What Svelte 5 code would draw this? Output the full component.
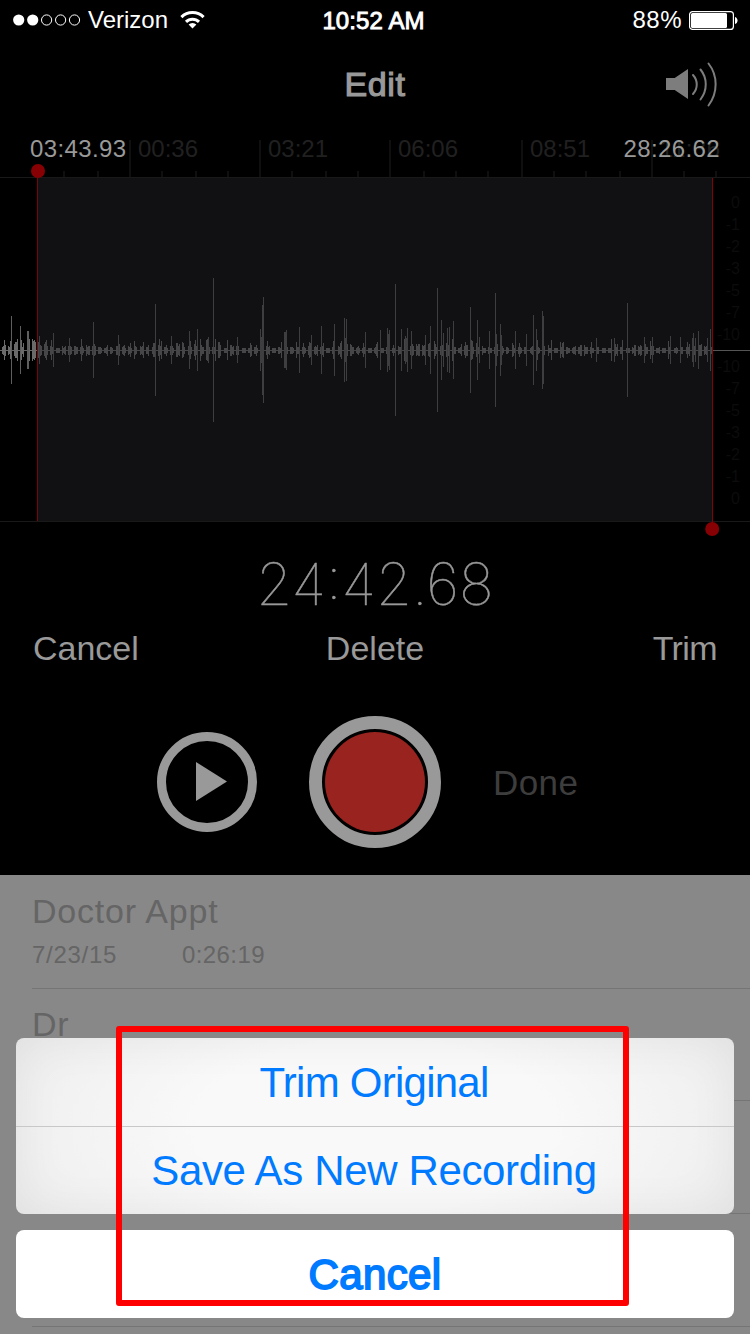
<script>
    // x offset and half height of every bar in the waveform
    const peaks = [
        "2:3 3:4 4:10 5:5 8:4 9:3 10:9 11:34 14:6 15:8 16:8 17:11 20:24 21:10 22:3 23:7 27:19 28:19 29:11 32:11 33:9 34:10 35:8",
        "38:8 39:14 40:5 41:4 44:6 45:8 46:10 47:4 50:4 51:10 52:3 53:17 56:2 57:2 58:2 59:2 62:4 63:2 64:3 65:4 68:4 69:12 70:4 71:3",
        "74:4 75:4 76:3 77:3 80:3 81:11 82:4 83:2 86:5 87:3 88:4 89:4 92:4 93:28 94:6 95:4 98:3 99:3 100:3 101:2 104:2 105:2 106:3 107:5",
        "110:3 111:3 112:2 116:4 117:4 118:15 119:6 122:3 123:4 124:5 125:2 128:4 129:3 130:7 131:2 134:9 135:4 136:3 140:4 141:3 142:4 143:8",
        "146:3 147:3 148:5 152:3 153:7 154:7 155:46 158:5 159:11 160:4 161:9 164:3 165:3 166:5 167:2 170:4 171:14 172:4 173:2 176:7 177:7 178:4 179:6",
        "182:8 183:7 184:3 188:4 189:19 190:9 191:3 194:6 195:10 196:4 197:21 200:11 201:5 202:3 203:3 206:10 207:11 208:13 209:3 212:3 213:72 214:3 215:11",
        "218:8 219:8 220:5 224:2 225:2 226:2 227:10 230:5 231:5 232:3 233:4 236:4 237:13 238:4 242:2 243:2 244:2 245:2 248:2 249:2 250:7 251:5",
        "254:3 255:3 256:5 257:2 260:21 261:13 262:45 263:53 266:4 267:9 268:3 269:4 272:2 273:2 274:2 275:2 278:3 279:3 280:2 281:8 284:18 285:18 286:20 287:3",
        "290:3 291:3 292:3 293:2 296:8 297:3 298:3 299:23 302:3 303:7 304:3 305:2 308:4 309:8 310:7 311:15 314:3 315:4 316:3 317:5 320:3 321:24 322:4 323:7",
        "326:2 327:2 328:2 329:2 332:3 333:9 334:26 338:4 339:3 340:7 341:9 344:32 345:12 346:31 347:6 350:6 351:5 352:3 353:3 356:2 357:3 358:4 359:2",
        "362:2 363:7 364:3 365:18 368:2 369:2 370:2 371:2 374:2 375:3 376:6 377:8 380:20 381:2 382:2 383:2 386:3 387:22 388:16 389:20 392:2 393:5 394:2 395:66",
        "398:4 399:3 400:3 401:21 404:11 405:14 406:12 407:22 410:4 411:19 412:6 413:4 416:6 417:4 418:6 419:6 422:5 423:4 424:5 425:15 428:6 429:7 430:24",
        "434:9 435:6 436:3 437:62 440:4 441:30 442:5 443:17 446:7 447:22 448:5 449:23 452:11 453:29 454:3 455:3 458:2 459:2 460:3 461:6 464:4 465:8 466:5 467:5",
        "470:43 471:10 472:9 473:3 476:7 477:30 478:3 479:13 482:4 483:2 484:2 485:2 488:3 489:19 490:2 491:2 494:3 495:57 496:16 497:6 500:26 501:15 502:4 503:2",
        "506:3 507:3 508:2 512:7 513:5 514:2 515:19 518:3 519:7 520:3 521:2 524:3 525:3 526:16 530:2 531:3 532:4 533:35 536:21 537:10 538:3 539:2 542:39 543:34 544:4",
        "548:5 549:2 550:2 551:10 554:2 555:2 556:2 557:2 560:8 561:3 562:7 563:8 566:3 567:3 568:2 569:2 572:2 573:3 574:3 575:4 578:3 579:3 580:5 581:5",
        "584:5 585:3 586:3 587:3 590:3 591:8 592:2 593:2 596:12 597:3 598:3 602:2 603:2 604:2 605:2 608:2 609:2 610:2 611:11 614:12 615:6 616:3 617:6 620:3 621:3 622:10",
        "626:2 627:47 628:2 629:2 632:3 633:2 634:5 635:5 638:4 639:3 640:5 641:4 644:13 645:6 646:3 647:3 650:9 651:4 652:13 653:4 656:2 657:2 658:2 659:3",
        "662:2 663:2 664:2 665:2 668:9 669:3 670:14 674:2 675:2 676:3 677:2 680:13 681:3 682:3 686:3 687:8 688:3 689:6 692:12 693:17 694:4 695:12",
        "698:19 699:5 700:5 701:6 704:4 705:3 706:4 707:12 710:21 711:3"
    ];
    const bars = peaks.join(" ").split(" ").map((p) => p.split(":").map(Number));

    const ruler = [
        { x: 129, label: "00:36" },
        { x: 259, label: "03:21" },
        { x: 389, label: "06:06" },
        { x: 521, label: "08:51" },
        { x: 651, label: "11:36" }
    ];
    const ticks = [63, 97, 161, 195, 227, 291, 325, 357, 423, 455, 487, 553, 585, 619, 683, 715];
    const levels = ["0", "-1", "-2", "-3", "-5", "-7", "-10"];

    const recordings = [
        { name: "Doctor Appt", date: "7/23/15", length: "0:26:19" },
        { name: "Dr", date: "", length: "" },
        { name: "", date: "", length: "" },
        { name: "", date: "", length: "" }
    ];

    function bar_color(x, h) {
        if(x < 37) {
            return h < 12 ? "#6a6a6a" : "#5e5e5e";
        }
        return h < 12 ? "#464648" : "#3e3e40";
    }
</script>

<div class="screen">
    <header class="status">
        <div class="carrier">
            <svg class="signal" width="68" height="12" viewBox="0 0 68 12">
                <circle cx="5.7" cy="6" r="5.6" fill="#fff" />
                <circle cx="19.7" cy="6" r="5.6" fill="#fff" />
                <g fill="none" stroke="#fff">
                    <circle cx="33.6" cy="6" r="5.1" />
                    <circle cx="47.6" cy="6" r="5.1" />
                    <circle cx="61.5" cy="6" r="5.1" />
                </g>
            </svg>
            <span class="name">Verizon</span>
            <svg class="wifi" width="25" height="19" viewBox="0 0 25 19">
                <g fill="none" stroke="#fff" stroke-width="3">
                    <path d="M1.4 7.1a15.6 15.6 0 0 1 22.2 0" />
                    <path d="M6 11.9a9.2 9.2 0 0 1 13 0" />
                </g>
                <path d="M12.5 18.4 8.6 14.6a5.6 5.6 0 0 1 7.8 0z" fill="#fff" />
            </svg>
        </div>
        <span class="clock">10:52 AM</span>
        <div class="power">
            <span>88%</span>
            <svg width="49" height="19" viewBox="0 0 49 19">
                <rect x=".6" y=".6" width="43.8" height="17.8" rx="3" fill="none" stroke="#fff" stroke-width="1.2" />
                <rect x="2" y="2" width="36" height="15" rx="1.5" fill="#fff" />
                <path d="M46 6c3.4 1 3.4 6 0 7z" fill="#fff" />
            </svg>
        </div>
    </header>

    <nav>
        <h1>Edit</h1>
        <svg class="speaker" width="54" height="46" viewBox="0 0 54 46">
            <path d="M1 17h8.700L23 8v30L9.700 29H1z" fill="#7d7d7d" />
            <g fill="none" stroke="#7d7d7d" stroke-width="2" stroke-linecap="round">
                <path d="M28 14c5 5.500 5 13.500 0 19" />
                <path d="M35.500 8.500c7 8.500 7 21 0 30" />
                <path d="M43.500 2.500c9.500 12 9.500 29.500 0 42" />
            </g>
        </svg>
    </nav>

    <svg class="wave" width="750" height="420" viewBox="0 128 750 420">
        <rect x="37" y="178" width="676" height="343" fill="#111113" />
        <path d="M0 177.500H750M0 521.500H750" stroke="#19191a" />
        {#each ruler as mark}
            <rect x={mark.x} y="140" width="2" height="37" fill="#0f0f0f" />
            <text class="mark" x={mark.x + 9} y="157" textLength="60">{mark.label}</text>
        {/each}
        {#each ticks as x}
            <rect {x} y="171" width="2" height="6" fill="#0f0f0f" />
        {/each}

        {#each levels as level, i}
            <text class="level" x="740" y={208 + i * 22}>{level}</text>
            <text class="level" x="740" y={504 - i * 22}>{level}</text>
        {/each}

        <rect x="0" y="350" width="37" height="1" fill="#666" />
        <rect x="38" y="350" width="674" height="1" fill="#454547" />
        <rect x="713" y="350" width="37" height="1" fill="#555" />
        {#each bars as [x, h]}
            <rect {x} y={350 - h} width="1" height={h < 6 ? h * 2 + 1 : h * 2} fill={bar_color(x, h)} />
        {/each}

        <g fill="#870003">
            <rect x="37" y="172" width="1" height="349" fill="#780509" />
            <circle cx="38" cy="171" r="7" />
            <rect x="712" y="178" width="1" height="350" />
            <circle cx="712.2" cy="529" r="7" />
        </g>
        <text class="bound" x="30" y="157" textLength="96">03:43.93</text>
        <text class="bound" x="623.500" y="157" textLength="96">28:26.62</text>
    </svg>

    <div class="elapsed">24:42.68</div>

    <div class="actions">
        <button>Cancel</button>
        <button>Delete</button>
        <button class="trim">Trim</button>
    </div>

    <div class="controls">
        <button class="play" aria-label="Play">
            <svg width="32" height="40" viewBox="0 0 32 40"><path d="M0 0 31 19.500 0 39z" fill="#999" /></svg>
        </button>
        <button class="record" aria-label="Record"><span></span></button>
        <button class="done">Done</button>
    </div>

    <ul>
        {#each recordings as rec}
            <li>
                <div class="title">{rec.name}</div>
                <div class="meta"><span class="date">{rec.date}</span><span>{rec.length}</span></div>
            </li>
        {/each}
    </ul>

    <div class="sheet">
        <div class="options">
            <button class="original">Trim Original</button>
            <button class="save">Save As New Recording</button>
        </div>
        <button class="dismiss">Cancel</button>
    </div>

    <div class="highlight"></div>
</div>

<style>
:global(body) {
    margin: 0;
    background: #000;
}
.screen {
    position: relative;
    width: 750px;
    height: 1334px;
    overflow: hidden;
    background: #000;
    color: #999;
    font-family: "Liberation Sans", Arial, sans-serif;
}
button {
    padding: 0;
    border: 0;
    background: none;
    color: inherit;
    font: inherit;
    display: block;
}
.status {
    height: 40px;
    padding: 0 12px 0 13px;
    display: grid;
    grid-template-columns: 1fr auto 1fr;
    align-items: center;
    color: #fff;
    font-size: 24px;
    line-height: 42px;
}
.carrier, .power {
    display: flex;
    align-items: center;
    height: 40px;
}
.carrier .name {
    margin: 0 12px 0 7px;
}
.wifi {
    margin-top: -2px;
}
.clock {
    margin-right: 4px;
    height: 40px;
    letter-spacing: .1px;
    -webkit-text-stroke: .9px #fff;
}
.power {
    justify-content: flex-end;
    gap: 7px;
}
.power span {
    letter-spacing: .5px;
}
nav {
    height: 88px;
    display: grid;
    grid-template-columns: 1fr auto 1fr;
    align-items: center;
}
h1 {
    grid-column: 2;
    margin: 0;
    font-size: 34px;
    line-height: 40px;
    font-weight: 400;
    letter-spacing: .6px;
    -webkit-text-stroke: 1.2px #999;
}
.speaker {
    justify-self: end;
    margin-right: 31px;
}
.wave {
    display: block;
}
.mark {
    fill: #202020;
    font-size: 24px;
}
.bound {
    fill: #999;
    font-size: 24px;
}
.level {
    fill: #0c0c0c;
    font-size: 16px;
    text-anchor: end;
}
.elapsed {
    height: 72px;
    line-height: 72px;
    text-align: center;
    font-family: Inter, "Liberation Sans", sans-serif;
    font-weight: 100;
    font-size: 58px;
    -webkit-text-stroke: .5px #999;
}
.actions {
    height: 56px;
    padding: 0 33px;
    display: grid;
    grid-template-columns: 1fr auto 1fr;
    align-items: center;
    font-size: 34px;
}
.actions button:first-child {
    justify-self: start;
}
.actions button:last-child {
    justify-self: end;
}
.actions .trim {
    letter-spacing: -.6px;
}
.controls {
    height: 199px;
    padding: 13px 171px 0 157px;
    display: flex;
    align-items: center;
    box-sizing: border-box;
}
.play {
    width: 100px;
    height: 100px;
    box-sizing: border-box;
    padding-left: 30px;
    border: 9px solid #999;
    border-radius: 50%;
}
.play svg {
    display: block;
}
.record {
    width: 132px;
    height: 132px;
    margin: 0 52px;
    box-sizing: border-box;
    padding: 3px;
    border: 13px solid #999;
    border-radius: 50%;
}
.record span {
    display: block;
    height: 100%;
    border-radius: 50%;
    background: #98231f;
}
.done {
    padding-top: 2px;
    color: #3d3d3d;
    font-size: 35px;
    letter-spacing: .4px;
}
ul {
    margin: 0;
    padding: 1px 0 20px;
    list-style: none;
    background: #888;
    color: #656565;
}
li {
    height: 112.7px;
    margin-left: 32px;
    padding-top: 15px;
    box-sizing: border-box;
    border-bottom: 1px solid #757575;
}
.title {
    height: 40px;
    font-size: 34px;
    line-height: 40px;
    letter-spacing: .8px;
}
.meta {
    margin-top: 9px;
    display: flex;
    font-size: 24px;
    line-height: 30px;
    letter-spacing: .4px;
}
.date {
    width: 150px;
    letter-spacing: .7px;
}
.sheet {
    position: absolute;
    left: 16px;
    right: 16px;
    bottom: 16px;
    display: flex;
    flex-direction: column;
    gap: 16px;
    color: #007aff;
    font-size: 42px;
}
.sheet button {
    width: 100%;
    height: 88px;
    padding-top: 2px;
    text-align: center;
}
.options {
    border-radius: 8px;
    background: radial-gradient(ellipse 62% 120% at center, #f9f9f9 40%, #ebebeb 100%);
    box-shadow: inset 0 0 50px rgba(0, 0, 0, .06);
}
.sheet .original {
    height: 89px;
    padding-right: 2px;
    border-bottom: 1px solid #c8c8c8;
    letter-spacing: -.75px;
}
.sheet .save {
    height: 87px;
    padding: 0 2px 0 0;
    letter-spacing: -.35px;
}
.sheet .dismiss {
    border-radius: 8px;
    background: #fff;
    letter-spacing: .4px;
    -webkit-text-stroke: 1.8px #007aff;
}
.highlight {
    position: absolute;
    left: 116px;
    top: 1026px;
    width: 501px;
    height: 268px;
    border: 6px solid #f00;
    border-radius: 3px;
}
</style>
